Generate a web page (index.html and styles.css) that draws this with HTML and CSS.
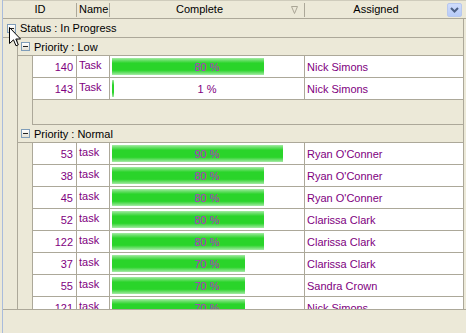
FILE: index.html
```html
<!DOCTYPE html>
<html lang="en">
<head>
  <meta charset="UTF-8" />
  <title>Tasks grid</title>
  <link rel="stylesheet" href="styles.css">
</head>
<body>
  <div class="grid">
    <div class="head">
      <div class="hcell h-id">ID</div>
      <div class="hcell h-name">Name</div>
      <div class="hcell h-complete">Complete
        <svg class="filter" width="7" height="8" viewBox="0 0 7 8"><path d="M0.5 0.5 H6.5 L3.5 7.5 Z" fill="none" stroke="#aaa696" /></svg>
      </div>
      <div class="hcell h-assigned">Assigned
        <span class="drop"><svg width="9" height="6" viewBox="0 0 9 6"><path d="M1 1 L4.5 4.5 L8 1" fill="none" stroke="#4d6185" stroke-width="2" /></svg></span>
      </div>
    </div>

    <div class="body">
      <div class="grow lvl1"><span class="toggle"></span>Status : In Progress</div>
      <div class="gbody">
        <div class="grow lvl2"><span class="toggle"></span>Priority : Low</div>
        <div class="gbody">
          <div class="row">
            <div class="c-id">140</div><div class="c-name">Task</div>
            <div class="c-comp"><div class="bar" style="width:80%"></div><span class="pct over">80 %</span></div>
            <div class="c-asg">Nick Simons</div>
          </div>
          <div class="row">
            <div class="c-id">143</div><div class="c-name">Task</div>
            <div class="c-comp"><div class="bar" style="width:1%"></div><span class="pct">1 %</span></div>
            <div class="c-asg">Nick Simons</div>
          </div>
          <div class="gfoot"></div>
        </div>

        <div class="grow lvl2"><span class="toggle"></span>Priority : Normal</div>
        <div class="gbody">
          <div class="row">
            <div class="c-id">53</div><div class="c-name">task</div>
            <div class="c-comp"><div class="bar" style="width:90%"></div><span class="pct over">90 %</span></div>
            <div class="c-asg">Ryan O'Conner</div>
          </div>
          <div class="row">
            <div class="c-id">38</div><div class="c-name">task</div>
            <div class="c-comp"><div class="bar" style="width:80%"></div><span class="pct over">80 %</span></div>
            <div class="c-asg">Ryan O'Conner</div>
          </div>
          <div class="row">
            <div class="c-id">45</div><div class="c-name">task</div>
            <div class="c-comp"><div class="bar" style="width:80%"></div><span class="pct over">80 %</span></div>
            <div class="c-asg">Ryan O'Conner</div>
          </div>
          <div class="row">
            <div class="c-id">52</div><div class="c-name">task</div>
            <div class="c-comp"><div class="bar" style="width:80%"></div><span class="pct over">80 %</span></div>
            <div class="c-asg">Clarissa Clark</div>
          </div>
          <div class="row">
            <div class="c-id">122</div><div class="c-name">task</div>
            <div class="c-comp"><div class="bar" style="width:80%"></div><span class="pct over">80 %</span></div>
            <div class="c-asg">Clarissa Clark</div>
          </div>
          <div class="row">
            <div class="c-id">37</div><div class="c-name">task</div>
            <div class="c-comp"><div class="bar" style="width:70%"></div><span class="pct over">70 %</span></div>
            <div class="c-asg">Clarissa Clark</div>
          </div>
          <div class="row">
            <div class="c-id">55</div><div class="c-name">task</div>
            <div class="c-comp"><div class="bar" style="width:70%"></div><span class="pct over">70 %</span></div>
            <div class="c-asg">Sandra Crown</div>
          </div>
          <div class="row">
            <div class="c-id">121</div><div class="c-name">task</div>
            <div class="c-comp"><div class="bar" style="width:70%"></div><span class="pct over">70 %</span></div>
            <div class="c-asg">Nick Simons</div>
          </div>
        </div>
      </div>
    </div>

    <div class="foot"></div>
  </div>

  <!-- mouse pointer over the status toggle -->
  <svg class="cursor" width="13" height="20" viewBox="0 0 13 20">
    <path d="M0.5 0.5 V16.5 L4.5 12.8 L7 18.8 L9.3 17.8 L6.8 12 H11.5 Z" fill="#fff" stroke="#000" stroke-linejoin="miter" />
  </svg>
</body>
</html>
```

FILE: styles.css
```css
* {
  box-sizing: border-box;
}
body {
  margin: 0;
  background: #ece9d8;
  font-family: "Liberation Sans", Tahoma, sans-serif;
  font-size: 11px;
  color: #000;
}
.grid {
  height: 333px;
  margin-left: 2px;
  border-left: 1px solid #a9bcdc;
  display: flex;
  flex-direction: column;
  overflow: hidden;
}

/* header */
.head {
  display: flex;
  height: 19px;
  flex: none;
  border-top: 1px solid #cfccbc;
  border-bottom: 1px solid #aca899;
}
.hcell {
  position: relative;
  display: flex;
  align-items: center;
  justify-content: center;
  padding-bottom: 1px;
}
.hcell::after {
  content: "";
  position: absolute;
  right: 0;
  top: 2px;
  bottom: 1px;
  width: 1px;
  background: #aca899;
}
.h-id {
  width: 74px;
}
.h-name {
  width: 33px;
  justify-content: flex-start;
  padding-left: 2px;
}
.h-complete {
  width: 195px;
  padding-right: 16px;
}
.h-assigned {
  width: 158px;
  padding-right: 16px;
}
.h-assigned::after {
  display: none;
}
.filter {
  position: absolute;
  right: 7px;
  top: 5px;
}
.drop {
  position: absolute;
  right: 1px;
  top: 2px;
  width: 15px;
  height: 14px;
  border: 1px solid #b8c8ee;
  border-radius: 2px;
  background: linear-gradient(#cfdcfd, #b7cbf7);
  display: flex;
  align-items: center;
  justify-content: center;
}

/* body */
.body {
  flex: 1;
  width: 461px;
  overflow: hidden;
}
.grow {
  display: flex;
  align-items: center;
  border-bottom: 1px solid #aca899;
  border-right: 1px solid #aca899;
}
.lvl1 {
  height: 19px;
  padding-left: 4px;
}
.lvl2 {
  height: 18px;
  padding-left: 3px;
}
.toggle {
  position: relative;
  width: 9px;
  height: 9px;
  margin-right: 4px;
  border: 1px solid #7f9db9;
  background: linear-gradient(#ffffff, #e2dfd3);
}
.toggle::after {
  content: "";
  position: absolute;
  left: 1px;
  top: 3px;
  width: 5px;
  height: 1px;
  background: #222;
}
.gbody {
  margin-left: 14px;
  border-left: 1px solid #aca899;
}
.gfoot {
  height: 25px;
  border-bottom: 1px solid #aca899;
  border-right: 1px solid #aca899;
}

.row {
  display: flex;
  height: 22px;
  background: #fff;
  color: #800080;
  border-bottom: 1px solid #aca899;
}
.row > div {
  border-right: 1px solid #aca899;
}
.c-id {
  width: 44px;
  text-align: right;
  padding: 5px 3px 0 0;
}
.c-name {
  width: 33px;
  padding: 3px 0 0 2px;
}
.c-comp {
  width: 195px;
  padding: 2px;
  display: grid;
}
.bar {
  grid-area: 1 / 1;
  height: 17px;
  background: linear-gradient(#a6eba6, #6fe06f 12%, #2ad42a 30%, #2ad42a 72%, #6fe06f 88%, #a6eba6);
}
.pct {
  grid-area: 1 / 1;
  justify-self: center;
  align-self: center;
  padding-top: 1px;
}
.pct.over {
  color: #b92cc8;
}
.c-asg {
  width: 159px;
  padding: 5px 0 0 2px;
}

.foot {
  height: 24px;
  flex: none;
  border-top: 1px solid #aca899;
}

.cursor {
  position: absolute;
  left: 9px;
  top: 27px;
}
```
